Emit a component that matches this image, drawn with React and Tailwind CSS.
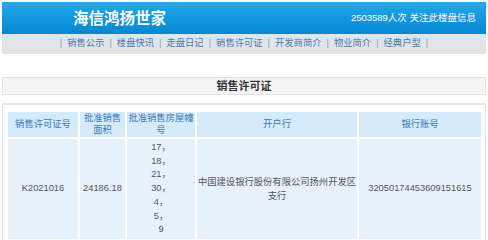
import React from "react";

const navItems = ["销售公示", "楼盘快讯", "走盘日记", "销售许可证", "开发商简介", "物业简介", "经典户型"];

const buildings = ["17，", "18，", "21，", "30，", "4，", "5，", "9"];

const App = () => {
  return (
    <div className="w-[488px] h-[240px] overflow-hidden bg-white px-[2px] pt-[2px] font-['Liberation_Sans','Noto_Sans_CJK_SC',sans-serif]">
      {/* header */}
      <div className="h-[32px] flex items-center justify-between bg-gradient-to-b from-[#22a8ec] to-[#0287d1] text-white">
        <div className="pl-[71px] pt-[2px] text-[15.5px] font-bold tracking-[0px]">海信鸿扬世家</div>
        <div className="pr-[10px] text-[9.5px]">2503589人次 关注此楼盘信息</div>
      </div>

      {/* nav */}
      <div className="h-[20px] flex items-center justify-center gap-[5px] bg-[#e2e5e7] text-[9.3px] text-[#4a78b0]">
        <span className="text-[#8a96d6]">|</span>
        {navItems.map((item) => (
          <React.Fragment key={item}>
            <span>{item}</span>
            <span className="text-[#8a96d6]">|</span>
          </React.Fragment>
        ))}
      </div>

      {/* section title */}
      <div className="mt-[23px] h-[18px] flex items-center justify-center border border-[#dde4ec] bg-[#f4f4f4] text-[11px] font-bold text-[#333]">
        销售许可证
      </div>

      {/* table */}
      <div className="mt-[8px] border border-[#e1e6ec] border-t-2 pt-[5px] pl-[3px] pr-[2px]">
        <table className="table-fixed border-separate border-spacing-[2px] text-[9.3px]">
          <thead>
            <tr className="h-[25px] text-[#3c78b8] leading-[11.5px]">
              <th className="w-[70px] bg-[#d5eafa] font-normal px-0">销售许可证号</th>
              <th className="w-[45px] bg-[#d5eafa] font-normal px-0">批准销售面积</th>
              <th className="w-[68px] bg-[#d5eafa] font-normal px-0">批准销售房屋幢号</th>
              <th className="w-[160px] bg-[#d5eafa] font-normal px-0">开户行</th>
              <th className="w-[122px] bg-[#d5eafa] font-normal px-0">银行账号</th>
            </tr>
          </thead>
          <tbody>
            <tr className="text-[#555] leading-[13.7px] text-center">
              <td className="bg-[#e6f2fb] py-[2px]">K2021016</td>
              <td className="bg-[#e6f2fb] py-[2px]">24186.18</td>
              <td className="bg-[#e6f2fb] py-[2px]">
                {buildings.map((b) => (
                  <div key={b}>{b}</div>
                ))}
              </td>
              <td className="bg-[#e6f2fb] py-[2px] leading-[14.3px]">中国建设银行股份有限公司扬州开发区支行</td>
              <td className="bg-[#e6f2fb] py-[2px]">32050174453609151615</td>
            </tr>
          </tbody>
        </table>
      </div>
    </div>
  );
};

export default App;
